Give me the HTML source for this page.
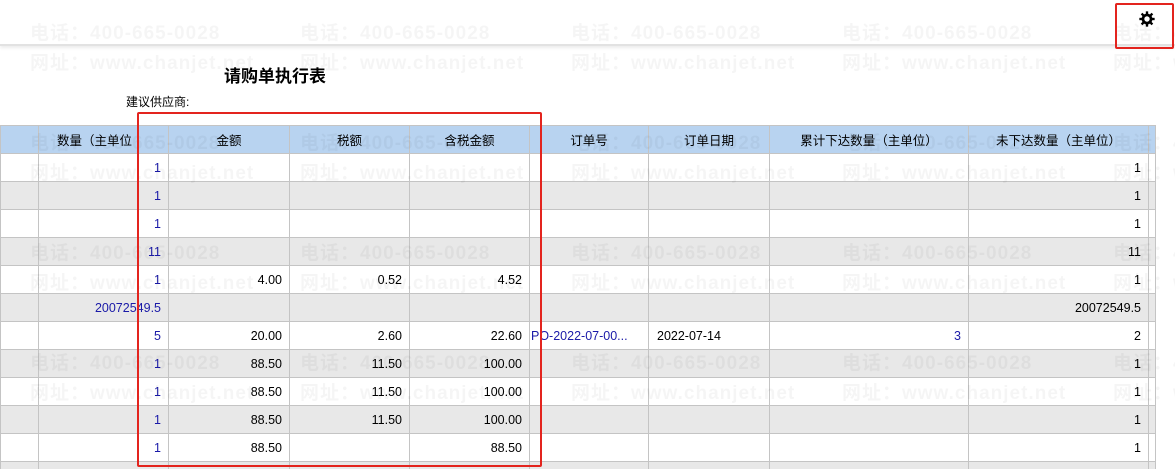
<!DOCTYPE html>
<html style="overflow:hidden;height:469px"><head><meta charset="utf-8"><style>
html{overflow:hidden}
body{margin:0;width:1175px;height:469px;overflow:hidden;background:#fff;font-family:"Liberation Sans","Noto Sans CJK SC",sans-serif;font-size:12px;color:#000;position:relative}
.bar{position:absolute;left:0;top:0;width:1175px;height:44px;border-bottom:2px solid #e2e2e2;box-shadow:0 2px 3px rgba(0,0,0,.08)}
.title{position:absolute;left:224px;top:62px;font-size:17px;font-weight:bold}
.sup{position:absolute;left:126px;top:93px;font-size:12px}
.wrap{position:absolute;left:0;top:125px;width:1175px;height:344px;overflow:hidden}
table{border-collapse:collapse;table-layout:fixed;width:1155px}
td,th{height:27px;border:1px solid #c4c4c4;padding:0 7px;white-space:nowrap;overflow:hidden;text-overflow:ellipsis;text-align:right;font-size:12.5px}
th{background:#b8d3f0;font-weight:normal;text-align:center;height:27px}
tr.g td{background:#e8e8e8}
.b{color:#1a1aa8}
td.l{text-align:left}
.wm{position:absolute;font-size:19px;color:rgba(0,0,0,.04);font-weight:bold;white-space:nowrap;z-index:5;letter-spacing:1px}
.red{position:absolute;border:2px solid #e3241e;border-radius:2px;z-index:6}
.gear{position:absolute;z-index:7}
</style></head><body>
<div class="bar"></div>
<div class="title">请购单执行表</div>
<div class="sup">建议供应商:</div>
<div class="wrap"><table>
<colgroup><col style="width:38px"><col style="width:130px"><col style="width:121px"><col style="width:120px"><col style="width:120px"><col style="width:119px"><col style="width:121px"><col style="width:199px"><col style="width:180px"><col style="width:7px"></colgroup>
<tr><th></th><th style="text-align:left;padding-left:18px">数量（主单位</th><th>金额</th><th>税额</th><th>含税金额</th><th>订单号</th><th>订单日期</th><th>累计下达数量（主单位）</th><th>未下达数量（主单位）</th><th></th></tr>
<tr><td></td><td class="b">1</td><td></td><td></td><td></td><td></td><td></td><td></td><td>1</td><td></td></tr>
<tr class="g"><td></td><td class="b">1</td><td></td><td></td><td></td><td></td><td></td><td></td><td>1</td><td></td></tr>
<tr><td></td><td class="b">1</td><td></td><td></td><td></td><td></td><td></td><td></td><td>1</td><td></td></tr>
<tr class="g"><td></td><td class="b">11</td><td></td><td></td><td></td><td></td><td></td><td></td><td>11</td><td></td></tr>
<tr><td></td><td class="b">1</td><td>4.00</td><td>0.52</td><td>4.52</td><td></td><td></td><td></td><td>1</td><td></td></tr>
<tr class="g"><td></td><td class="b">20072549.5</td><td></td><td></td><td></td><td></td><td></td><td></td><td>20072549.5</td><td></td></tr>
<tr><td></td><td class="b">5</td><td>20.00</td><td>2.60</td><td>22.60</td><td class="b l" style="padding-left:1px">PO-2022-07-00...</td><td class="l" style="padding-left:8px">2022-07-14</td><td class="b">3</td><td>2</td><td></td></tr>
<tr class="g"><td></td><td class="b">1</td><td>88.50</td><td>11.50</td><td>100.00</td><td></td><td></td><td></td><td>1</td><td></td></tr>
<tr><td></td><td class="b">1</td><td>88.50</td><td>11.50</td><td>100.00</td><td></td><td></td><td></td><td>1</td><td></td></tr>
<tr class="g"><td></td><td class="b">1</td><td>88.50</td><td>11.50</td><td>100.00</td><td></td><td></td><td></td><td>1</td><td></td></tr>
<tr><td></td><td class="b">1</td><td>88.50</td><td></td><td>88.50</td><td></td><td></td><td></td><td>1</td><td></td></tr>
<tr class="g"><td></td><td></td><td></td><td></td><td></td><td></td><td></td><td></td><td></td><td></td></tr>
</table></div>
<div class="wm" style="left:30px;top:18px">电话：400-665-0028</div><div class="wm" style="left:300px;top:18px">电话：400-665-0028</div><div class="wm" style="left:571px;top:18px">电话：400-665-0028</div><div class="wm" style="left:842px;top:18px">电话：400-665-0028</div><div class="wm" style="left:1113px;top:18px">电话：400-665-0028</div>
<div class="wm" style="left:30px;top:48px">网址：www.chanjet.net</div><div class="wm" style="left:300px;top:48px">网址：www.chanjet.net</div><div class="wm" style="left:571px;top:48px">网址：www.chanjet.net</div><div class="wm" style="left:842px;top:48px">网址：www.chanjet.net</div><div class="wm" style="left:1113px;top:48px">网址：www.chanjet.net</div>
<div class="wm" style="left:30px;top:128px">电话：400-665-0028</div><div class="wm" style="left:300px;top:128px">电话：400-665-0028</div><div class="wm" style="left:571px;top:128px">电话：400-665-0028</div><div class="wm" style="left:842px;top:128px">电话：400-665-0028</div><div class="wm" style="left:1113px;top:128px">电话：400-665-0028</div>
<div class="wm" style="left:30px;top:158px">网址：www.chanjet.net</div><div class="wm" style="left:300px;top:158px">网址：www.chanjet.net</div><div class="wm" style="left:571px;top:158px">网址：www.chanjet.net</div><div class="wm" style="left:842px;top:158px">网址：www.chanjet.net</div><div class="wm" style="left:1113px;top:158px">网址：www.chanjet.net</div>
<div class="wm" style="left:30px;top:238px">电话：400-665-0028</div><div class="wm" style="left:300px;top:238px">电话：400-665-0028</div><div class="wm" style="left:571px;top:238px">电话：400-665-0028</div><div class="wm" style="left:842px;top:238px">电话：400-665-0028</div><div class="wm" style="left:1113px;top:238px">电话：400-665-0028</div>
<div class="wm" style="left:30px;top:268px">网址：www.chanjet.net</div><div class="wm" style="left:300px;top:268px">网址：www.chanjet.net</div><div class="wm" style="left:571px;top:268px">网址：www.chanjet.net</div><div class="wm" style="left:842px;top:268px">网址：www.chanjet.net</div><div class="wm" style="left:1113px;top:268px">网址：www.chanjet.net</div>
<div class="wm" style="left:30px;top:348px">电话：400-665-0028</div><div class="wm" style="left:300px;top:348px">电话：400-665-0028</div><div class="wm" style="left:571px;top:348px">电话：400-665-0028</div><div class="wm" style="left:842px;top:348px">电话：400-665-0028</div><div class="wm" style="left:1113px;top:348px">电话：400-665-0028</div>
<div class="wm" style="left:30px;top:378px">网址：www.chanjet.net</div><div class="wm" style="left:300px;top:378px">网址：www.chanjet.net</div><div class="wm" style="left:571px;top:378px">网址：www.chanjet.net</div><div class="wm" style="left:842px;top:378px">网址：www.chanjet.net</div><div class="wm" style="left:1113px;top:378px">网址：www.chanjet.net</div>
<div class="red" style="left:137px;top:112px;width:401px;height:351px"></div>
<div class="red" style="left:1115px;top:3px;width:55px;height:42px"></div>
<svg class="gear" style="left:1138px;top:10px" width="18" height="18" viewBox="0 0 20 20"><g stroke="#000" stroke-width="2.6" stroke-linecap="butt"><line x1="10" y1="1.5" x2="10" y2="18.5"/><line x1="1.5" y1="10" x2="18.5" y2="10"/><line x1="4" y1="4" x2="16" y2="16"/><line x1="16" y1="4" x2="4" y2="16"/></g><circle cx="10" cy="10" r="6" fill="#000"/><circle cx="10" cy="10" r="3" fill="#fff"/></svg>
</body></html>
